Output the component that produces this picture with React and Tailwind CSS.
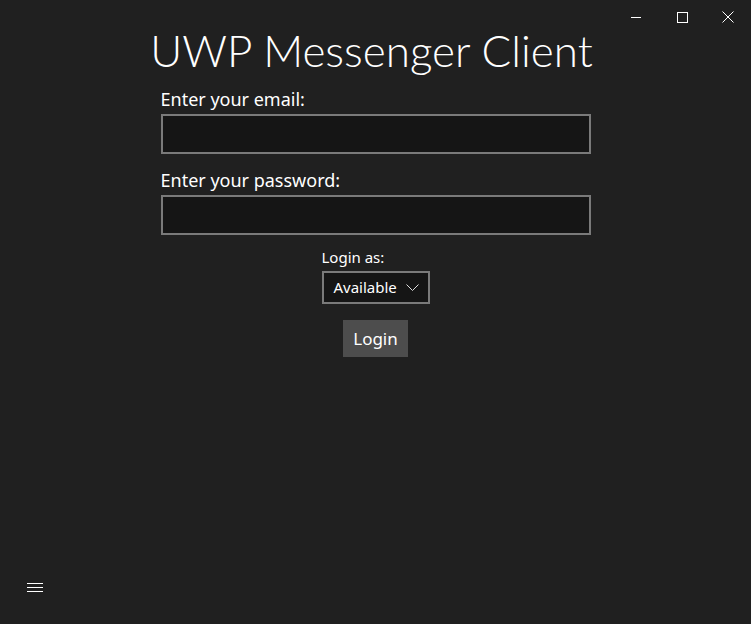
import React from 'react';

// Window caption buttons (minimize / maximize / close)
const CaptionButtons = () => (
  <div className="flex justify-end h-[34px]">
    <div className="w-[46px] h-[34px] flex items-center justify-center">
      <svg width="11" height="11" viewBox="0 0 11 11"><path d="M0 5.5h10" stroke="#fff" strokeWidth="1" /></svg>
    </div>
    <div className="w-[46px] h-[34px] flex items-center justify-center">
      <svg width="11" height="11" viewBox="0 0 11 11"><rect x="0.5" y="0.5" width="10" height="10" fill="none" stroke="#fff" strokeWidth="1" /></svg>
    </div>
    <div className="w-[46px] h-[34px] flex items-center justify-center">
      <svg width="12" height="12" viewBox="0 0 12 12"><path d="M0.5 0.5l11 11M11.5 0.5l-11 11" stroke="#fff" strokeWidth="1" /></svg>
    </div>
  </div>
);

export default function App() {
  return (
    <div
      className="w-[751px] h-[624px] bg-[#202020] text-white flex flex-col overflow-hidden"
      style={{ fontFamily: '"Noto Sans", "Open Sans", sans-serif' }}
    >
      <CaptionButtons />

      <div className="flex flex-col items-center -mt-[14px]">
        <h1
          className="text-[44px] leading-[60px] font-light pr-[8px]"
          style={{ fontFamily: 'Lato, "Noto Sans", sans-serif' }}
        >
          UWP Messenger Client
        </h1>

        <div className="w-[430px] mt-[7px]">
          <label className="block text-[18px] leading-[24px]">Enter your email:</label>
          <div className="mt-[3px] h-[40px] border-2 border-[#7a7a7a] bg-[#151515]" />

          <label className="block text-[18px] leading-[24px] mt-[14px]">Enter your password:</label>
          <div className="mt-[3px] h-[40px] border-2 border-[#7a7a7a] bg-[#151515]" />
        </div>

        <div className="flex flex-col items-start mt-[12px]">
          <span className="text-[15px] leading-[20px]">Login as:</span>
          <div className="mt-[4px] w-[108px] h-[33px] border-2 border-[#7a7a7a] bg-[#151515] flex items-center justify-between pl-[10px] pr-[9px]">
            <span className="text-[15px]">Available</span>
            <svg width="13" height="8" viewBox="0 0 13 8"><path d="M0.5 0.5l6 6 6-6" fill="none" stroke="#ddd" strokeWidth="1" /></svg>
          </div>
        </div>

        <button className="mt-[16px] w-[65px] h-[37px] bg-[#4d4d4d] text-[17px] text-white">Login</button>
      </div>

      <div className="flex-1" />
      <div className="h-[48px] w-[48px] flex items-center justify-center mb-[12px] ml-[11px]">
        <svg width="16" height="10" viewBox="0 0 16 10">
          <path d="M0 0.5h16M0 4.5h16M0 8.5h16" stroke="#fff" strokeWidth="1" />
        </svg>
      </div>
    </div>
  );
}
